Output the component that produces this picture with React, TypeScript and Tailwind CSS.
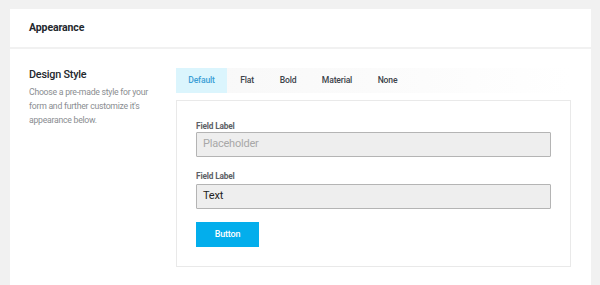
export default function App() {
  const tabs = [
    { label: "Default", w: "w-[51px]", active: true },
    { label: "Flat", w: "w-[40px]", active: false },
    { label: "Bold", w: "w-[42px]", active: false },
    { label: "Material", w: "w-[56px]", active: false },
    { label: "None", w: "w-[45px]", active: false },
  ];

  return (
    <div className="flex h-[285px] w-[600px] flex-col overflow-hidden bg-[#f1f1f1] pl-[10px] pr-[9px] pt-[9px] font-['Roboto',sans-serif]">
      <div className="flex h-[38px] items-center bg-white px-[19px]">
        <h1 className="text-[10.5px] font-bold tracking-[-0.01em] text-[#23282d]">Appearance</h1>
      </div>

      <div className="mt-[2px] flex flex-1 bg-white pl-[19px] pt-[19px]">
        <div className="w-[147px]">
          <h2 className="text-[10.8px] leading-[14px] font-medium tracking-[-0.02em] text-[#23282d]">Design Style</h2>
          <p className="mt-[3px] w-[125px] text-[8.7px] leading-[14px] tracking-[-0.03em] text-[#8a8d91]">
            Choose a pre-made style for your form and further customize it's appearance below.
          </p>
        </div>

        <div className="w-[395px]">
          <div className="flex h-[25px] bg-gradient-to-r from-[#f8f8f8] via-[#fbfbfb] to-white">
            {tabs.map((t) => (
              <div
                key={t.label}
                className={
                  t.active
                    ? `${t.w} flex items-center justify-center bg-[#dbf5fd] text-[8.6px] font-medium tracking-[-0.02em] text-[#3b9fd6]`
                    : `${t.w} flex items-center justify-center text-[8.6px] font-medium tracking-[-0.02em] text-[#3c434a]`
                }
              >
                {t.label}
              </div>
            ))}
          </div>

          <div className="mt-[7px] h-[167px] border border-[#e9e9e9] bg-white px-[19px] pt-[19px]">
            <div className="h-[12px] text-[8.3px] leading-[12px] font-bold tracking-[-0.02em] text-[#5d6166]">Field Label</div>
            <div className="flex h-[25px] items-center rounded-[1px] border border-[#b4b4b4] bg-[#eeeeee] px-[6px] text-[11px] tracking-[-0.02em] text-[#a8a8a8]">
              Placeholder
            </div>

            <div className="mt-[13px] h-[12px] text-[8.3px] leading-[12px] font-bold tracking-[-0.02em] text-[#5d6166]">Field Label</div>
            <div className="mt-[2px] flex h-[25px] items-center rounded-[1px] border border-[#b4b4b4] bg-[#eeeeee] px-[6px] text-[11px] tracking-[-0.02em] text-[#222222]">
              Text
            </div>

            <button className="mt-[13px] flex h-[25px] w-[63px] items-center justify-center bg-[#03aeec] text-[9px] font-medium tracking-[-0.02em] text-white">
              Button
            </button>
          </div>
        </div>
      </div>
    </div>
  );
}
